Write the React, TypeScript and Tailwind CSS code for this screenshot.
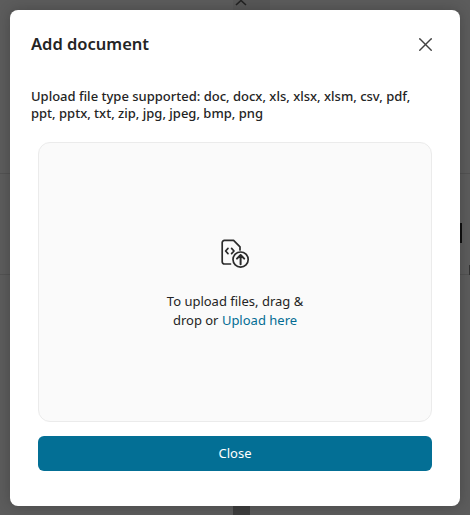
import { X } from "lucide-react";

function UploadIcon() {
  return (
    <svg width="30" height="30" viewBox="0 0 30 30" fill="none" stroke="#2b2b2b" strokeWidth="1.7" strokeLinecap="round" strokeLinejoin="round">
      <path d="M10.5 25H4.4a2.2 2.2 0 0 1-2.2-2.2V3.6a2.2 2.2 0 0 1 2.2-2.2h9.2l6.4 6.4V11" />
      <path d="M8 9.4 5.6 12 8 14.6M11.6 9.4l2.4 2.6-2.4 2.6" />
      <circle cx="20.6" cy="20.6" r="7.6" />
      <path d="M20.6 25.2v-9M17 19.6l3.6-3.6 3.6 3.6" strokeWidth="2" />
    </svg>
  );
}

export default function App() {
  return (
    <div className="relative h-[515px] w-[470px] overflow-hidden bg-[#5c5c5c] pt-[10px] pl-[10px] font-['Noto_Sans','Open_Sans',sans-serif] text-[#242424]">
      {/* page content showing behind the overlay */}
      <div className="absolute top-0 left-[233px] h-[10px] w-[37px] bg-[#575757]" />
      <svg className="absolute top-0 left-[235px]" width="12" height="6" viewBox="0 0 12 6" fill="none" stroke="#222" strokeWidth="1.6">
        <path d="M1 5 6 0.5 11 5" />
      </svg>
      <div className="absolute bottom-0 left-[233px] h-[10px] w-[17px] bg-[#3d3d3d]" />
      <div className="absolute top-[173px] left-0 h-px w-full bg-[#525252]" />
      <div className="absolute top-[274px] left-0 h-px w-full bg-[#525252]" />
      <div className="absolute top-[223px] left-[460px] h-[20px] w-[2px] bg-[#111]" />
      <div className="absolute top-[265px] left-[469px] h-[10px] w-px bg-[#333]" />
      <div className="relative flex h-[496px] w-[450px] flex-col rounded-lg bg-white pt-[20px] pr-[28px] pb-[34px] pl-[21px] shadow-[0_0_14px_rgba(0,0,0,0.22)]">
        <div className="flex items-center justify-between">
          <h2 className="text-[16.5px] leading-7 font-semibold">Add document</h2>
          <button className="-mr-[5px] text-[#424242]">
            <X size={23} strokeWidth={1.5} />
          </button>
        </div>
        <p className="mt-[30px] text-[13px] leading-[17px] font-medium">
          Upload file type supported: doc, docx, xls, xlsx, xlsm, csv, pdf, ppt, pptx, txt, zip, jpg, jpeg, bmp, png
        </p>
        <div className="mt-[20px] ml-[7px] flex h-[280px] w-[394px] flex-col items-center justify-center rounded-xl border border-[#ebebeb] bg-[#fafafa] pt-[4px]">
          <UploadIcon />
          <p className="mt-[23px] w-[160px] text-center text-[13px] leading-[19px]">
            To upload files, drag &amp; drop or <span className="text-[#036c93]">Upload here</span>
          </p>
        </div>
        <button className="mt-[14px] ml-[7px] h-[35px] w-[394px] rounded-md bg-[#036f95] pt-px text-[13px] text-white">Close</button>
      </div>
    </div>
  );
}
